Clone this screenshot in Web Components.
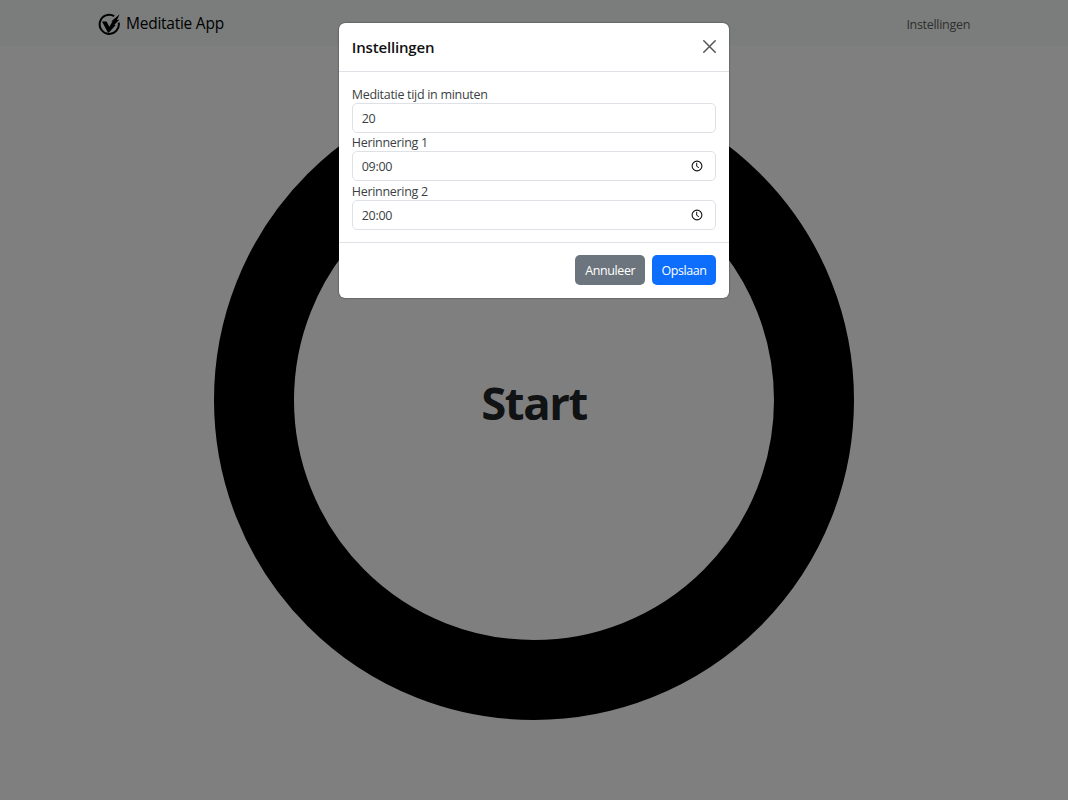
<!DOCTYPE html>
<html lang="nl">
<head>
<meta charset="utf-8">
<title>Meditatie App</title>
<style>
    html, body {
        margin: 0;
        height: 100%;
        overflow: hidden;
    }

    body {
        background: #fff;
        color: #212529;
        font: 12.5px/19px "Open Sans", "Noto Sans", sans-serif;
        letter-spacing: -0.3px;
    }
</style>
</head>
<body>
<meditation-app></meditation-app>

<script>
class AppNavbar extends HTMLElement {
    constructor() {
        super();
        this.attachShadow({ mode: 'open' }).innerHTML = `
            <style>
                :host {
                    display: flex;
                    box-sizing: border-box;
                    height: 46px;
                    padding: 0 98px;
                    align-items: center;
                    justify-content: space-between;
                    background: #f5fbf9;
                }
                .brand {
                    display: flex;
                    align-items: center;
                    gap: 5px;
                    color: #000;
                    font-size: 15.5px;
                    line-height: 24px;
                    letter-spacing: -0.25px;
                }
                svg { display: block; margin-top: 2px; }
                a { color: #5c5e5e; margin-top: 2px; }
            </style>
            <div class="brand">
                <svg width="23" height="23" viewBox="0 0 23 23">
                    <path d="M16.2 3.1A9.6 9.6 0 1 0 20.7 9.6" fill="none" stroke="#000" stroke-width="2"/>
                    <path d="M4 8.6h4.6l2.7 5.2 3.2-5.2-1.3-.1 8.4-7.2-2.6 5.7 2.3-.2-4.9 5 1.3.1-6.9 7.9H10z" fill="#000"/>
                </svg>
                <span><slot></slot></span>
            </div>
            <a>Instellingen</a>
        `;
    }
}

class StartRing extends HTMLElement {
    constructor() {
        super();
        this.attachShadow({ mode: 'open' }).innerHTML = `
            <style>
                :host {
                    display: flex;
                    box-sizing: border-box;
                    width: 640px;
                    height: 640px;
                    border: 80px solid #000;
                    border-radius: 50%;
                    align-items: center;
                    justify-content: center;
                }
                span {
                    font-size: 45.5px;
                    line-height: 60px;
                    font-weight: 700;
                    letter-spacing: -1.4px;
                    margin-top: 4px;
                }
            </style>
            <span><slot></slot></span>
        `;
    }
}

class FormField extends HTMLElement {
    constructor() {
        super();
        const clock = this.getAttribute('type') === 'time' ? `
            <svg width="12" height="12" viewBox="0 0 12 12" fill="none" stroke="#111">
                <circle cx="6" cy="6" r="4.9" stroke-width="1.1"/>
                <path d="M5.7 2.8v3.5l2.2 1.4" stroke-width="1"/>
            </svg>` : '';
        this.attachShadow({ mode: 'open' }).innerHTML = `
            <style>
                :host { display: block; color: #3b3f43; }
                label {
                    display: block;
                    box-sizing: border-box;
                    height: 18.5px;
                    padding-top: 1.5px;
                    line-height: 18.5px;
                }
                .control {
                    display: flex;
                    box-sizing: border-box;
                    height: 30px;
                    padding: 0 12.5px 0 9px;
                    align-items: center;
                    justify-content: space-between;
                    border: 1px solid #dee2e6;
                    border-radius: 5px;
                }
                .control span { padding-top: 1px; }
            </style>
            <label>${this.getAttribute('label')}</label>
            <div class="control"><span><slot></slot></span>${clock}</div>
        `;
    }
}

class AppButton extends HTMLElement {
    constructor() {
        super();
        this.attachShadow({ mode: 'open' }).innerHTML = `
            <style>
                :host {
                    display: flex;
                    box-sizing: border-box;
                    width: 70px;
                    height: 29.5px;
                    align-items: center;
                    justify-content: center;
                    border-radius: 5px;
                    background: #6c757d;
                    color: #fff;
                    font-weight: 500;
                    letter-spacing: -0.4px;
                }
                :host([primary]) { width: 64.5px; background: #0d6efd; }
            </style>
            <slot></slot>
        `;
    }
}

class SettingsModal extends HTMLElement {
    constructor() {
        super();
        this.attachShadow({ mode: 'open' }).innerHTML = `
            <style>
                :host {
                    display: block;
                    width: 389.5px;
                    border-radius: 6px;
                    background: #fff;
                    box-shadow: 0 0 1.5px rgba(0, 0, 0, .8);
                }
                header, footer { display: flex; box-sizing: border-box; align-items: center; }
                header {
                    height: 49px;
                    padding: 0 12.5px;
                    justify-content: space-between;
                    border-bottom: 1px solid #dee2e6;
                }
                h5 {
                    margin: 0;
                    font-size: 15px;
                    font-weight: 600;
                    line-height: 20px;
                    letter-spacing: -0.17px;
                    color: #111;
                }
                section { box-sizing: border-box; height: 170px; padding: 12.5px; }
                footer {
                    height: 56px;
                    padding: 0 12.5px;
                    gap: 6.5px;
                    justify-content: flex-end;
                    border-top: 1px solid #dee2e6;
                }
            </style>
            <header>
                <h5>Instellingen</h5>
                <svg width="13" height="13" viewBox="0 0 13 13" fill="none" stroke="#555" stroke-width="1.5" stroke-linecap="round">
                    <path d="M.8.8l11.4 11.4M12.2.8L.8 12.2"/>
                </svg>
            </header>
            <section>
                <form-field label="Meditatie tijd in minuten">20</form-field>
                <form-field label="Herinnering 1" type="time">09:00</form-field>
                <form-field label="Herinnering 2" type="time">20:00</form-field>
            </section>
            <footer>
                <app-button>Annuleer</app-button>
                <app-button primary>Opslaan</app-button>
            </footer>
        `;
    }
}

class MeditationApp extends HTMLElement {
    constructor() {
        super();
        this.attachShadow({ mode: 'open' }).innerHTML = `
            <style>
                :host { display: block; position: relative; height: 800px; }
                main { display: flex; justify-content: center; padding-top: 34px; }
                .backdrop {
                    position: absolute;
                    inset: 0;
                    display: flex;
                    justify-content: center;
                    align-items: flex-start;
                    padding-top: 22.6px;
                    background: rgba(0, 0, 0, .5);
                }
            </style>
            <app-navbar>Meditatie App</app-navbar>
            <main><start-ring>Start</start-ring></main>
            <div class="backdrop"><settings-modal></settings-modal></div>
        `;
    }
}

window.customElements.define('app-navbar', AppNavbar);
window.customElements.define('start-ring', StartRing);
window.customElements.define('form-field', FormField);
window.customElements.define('app-button', AppButton);
window.customElements.define('settings-modal', SettingsModal);
window.customElements.define('meditation-app', MeditationApp);
</script>
</body>
</html>
